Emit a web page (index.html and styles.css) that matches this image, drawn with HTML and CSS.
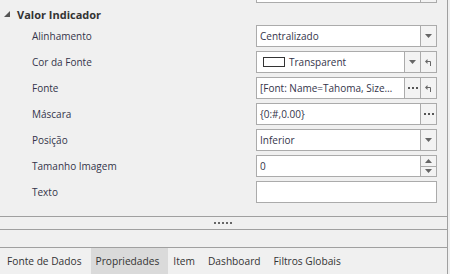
FILE: index.html
```html
<!DOCTYPE html>
<html>
<head>
<meta charset="utf-8">
<link rel="stylesheet" href="styles.css">
</head>
<body>
<div class="wrap">
  <div class="grid">
    <div class="row first">
      <div class="label"></div>
      <div class="editor"><div class="val"></div><div class="btn"><svg width="7" height="4" viewBox="0 0 7 4"><path d="M0 0H7L3.5 4Z" fill="#666"/></svg></div></div>
    </div>
    <div class="header"><svg class="tri" width="6" height="6" viewBox="0 0 6 6"><path d="M6 0V6H0Z" fill="#555"/></svg><span>Valor Indicador</span></div>
    <div class="row">
      <div class="label">Alinhamento</div>
      <div class="editor"><div class="val">Centralizado</div><div class="btn"><svg width="7" height="4" viewBox="0 0 7 4"><path d="M0 0H7L3.5 4Z" fill="#666"/></svg></div></div>
    </div>
    <div class="row">
      <div class="label">Cor da Fonte</div>
      <div class="editor"><div class="val"><span class="swatch"></span>Transparent</div><div class="btn"><svg width="7" height="4" viewBox="0 0 7 4"><path d="M0 0H7L3.5 4Z" fill="#666"/></svg></div><div class="btn"><svg width="7" height="7" viewBox="0 0 7 7"><path d="M5.5 7V2.5H1.5" fill="none" stroke="#666" stroke-width="1"/><path d="M0 2.5L2.5 0V5Z" fill="#666"/></svg></div></div>
    </div>
    <div class="row">
      <div class="label">Fonte</div>
      <div class="editor"><div class="val">[Font: Name=Tahoma, Size…</div><div class="btn"><span class="dots3"><i></i><i></i><i></i></span></div><div class="btn"><svg width="7" height="7" viewBox="0 0 7 7"><path d="M5.5 7V2.5H1.5" fill="none" stroke="#666" stroke-width="1"/><path d="M0 2.5L2.5 0V5Z" fill="#666"/></svg></div></div>
    </div>
    <div class="row">
      <div class="label">Máscara</div>
      <div class="editor"><div class="val">{0:#,0.00}</div><div class="btn"><span class="dots3"><i></i><i></i><i></i></span></div></div>
    </div>
    <div class="row">
      <div class="label">Posição</div>
      <div class="editor"><div class="val">Inferior</div><div class="btn"><svg width="7" height="4" viewBox="0 0 7 4"><path d="M0 0H7L3.5 4Z" fill="#666"/></svg></div></div>
    </div>
    <div class="row">
      <div class="label">Tamanho Imagem</div>
      <div class="editor"><div class="val">0</div><div class="btn spin"><div class="half"><svg width="7" height="4" viewBox="0 0 7 4"><path d="M0 4H7L3.5 0Z" fill="#666"/></svg></div><div class="half down"><svg width="7" height="4" viewBox="0 0 7 4"><path d="M0 0H7L3.5 4Z" fill="#666"/></svg></div></div></div>
    </div>
    <div class="row">
      <div class="label">Texto</div>
      <div class="editor"><div class="val"></div></div>
    </div>
  </div>
  <div class="splitter"><i></i><i></i><i></i><i></i><i></i></div>
  <div class="desc"></div>
  <div class="tabs">
    <div class="tab first-tab">Fonte de Dados</div>
    <div class="tab active">Propriedades</div>
    <div class="tab after-active">Item</div>
    <div class="tab">Dashboard</div>
    <div class="tab">Filtros Globais</div>
  </div>
</div>
</body>
</html>
```
FILE: styles.css
```css
* { box-sizing: border-box; }
html, body { margin: 0; padding: 0; }
body {
  width: 450px;
  height: 274px;
  overflow: hidden;
  background: #f0f0f0;
  font-family: "Open Sans", sans-serif;
  font-size: 10px;
  color: #34344a;
}
.wrap {
  width: 448px;
  height: 274px;
  border-right: 1px solid #a0a0a0;
  display: flex;
  flex-direction: column;
}
.grid {
  height: 217px;
  border-bottom: 1px solid #a0a0a0;
  overflow: hidden;
  flex: none;
}
.row {
  display: grid;
  grid-template-columns: 256px 181px;
  height: 26px;
  align-items: center;
}
.row.first { margin-top: -21px; }
.label { padding-left: 32px; white-space: nowrap; }
.header {
  height: 18px;
  display: flex;
  align-items: center;
  font-weight: bold;
  font-size: 11px;
  color: #333;
}
.tri { margin-left: 4px; margin-right: 7px; }
.editor {
  height: 22px;
  border: 1px solid #ababab;
  background: #fff;
  display: flex;
}
.val {
  flex: 1;
  padding-left: 3px;
  display: flex;
  align-items: center;
  white-space: nowrap;
  overflow: hidden;
}
.btn {
  width: 16px;
  border-left: 1px solid #ababab;
  background: #f3f3f3;
  display: flex;
  align-items: center;
  justify-content: center;
  flex: none;
}
.spin { flex-direction: column; }
.half {
  flex: 1;
  width: 100%;
  display: flex;
  align-items: center;
  justify-content: center;
}
.half.down { border-top: 1px solid #ababab; }
.swatch {
  width: 22px;
  height: 10px;
  border: 1px solid #333;
  background: #fff;
  margin-left: 3px;
  margin-right: 4px;
}
.dots3 { display: flex; gap: 2px; }
.dots3 i { width: 2px; height: 2px; background: #555; display: block; }
.splitter {
  height: 13px;
  border-bottom: 1px solid #a0a0a0;
  display: flex;
  justify-content: center;
  align-items: center;
  gap: 2px;
  padding-right: 2px;
  flex: none;
}
.splitter i { width: 2px; height: 2px; background: #666; display: block; }
.desc {
  height: 18px;
  border-bottom: 1px solid #a0a0a0;
  flex: none;
}
.tabs {
  display: flex;
  height: 26px;
  font-size: 10.2px;
  color: #333;
}
.tab {
  padding: 0 6.5px;
  display: flex;
  align-items: center;
}
.tab.first-tab { padding: 0 7px; }
.tab.active { background: #dadada; padding: 0 9px 0 5px; margin-left: 2px; }
.tab.after-active { padding-left: 5px; }
```
